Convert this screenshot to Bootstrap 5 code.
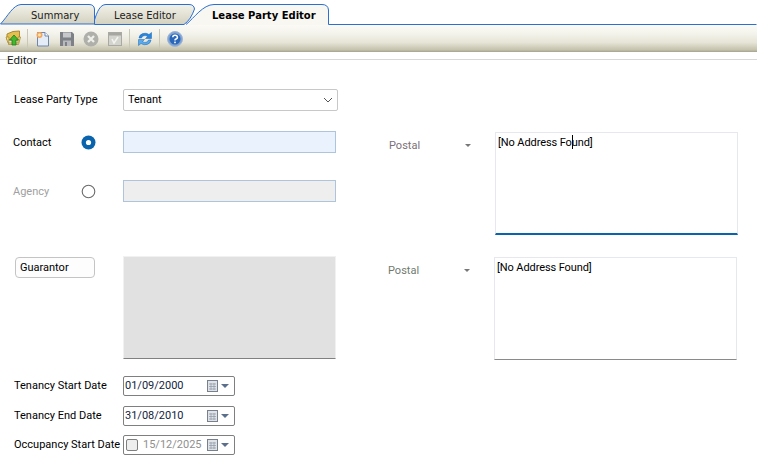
<!DOCTYPE html>
<html lang="en">
<head>
<meta charset="utf-8">
<title>Lease Party Editor</title>
<link rel="stylesheet" href="https://cdn.jsdelivr.net/npm/bootstrap@5.3.0/dist/css/bootstrap.min.css">
<style>
html,body{width:757px;height:465px;overflow:hidden;background:#fff;color:#000;font-family:Roboto,"Liberation Sans",sans-serif;font-size:11px;line-height:14px}
.tabstrip{height:25px;position:relative;background:#fff}
.tabshape{position:absolute;left:0;top:0}
.tabtext{position:absolute;top:9px;font-family:"DejaVu Sans",sans-serif;font-size:10px;line-height:14px;color:#222;white-space:nowrap}
.tabtext.act{font-weight:700;color:#000;font-size:10px}
.toolstrip{height:27px;background:linear-gradient(#fbfaf6 0,#f3f2ea 35%,#e6e4d6 65%,#c4c2ac 92%,#a5a38c 100%);padding-left:5px}
.toolstrip svg{display:block;flex:none}
.tsep{width:1px;height:20px;background:#c9c7b6;flex:none}
.tl5{margin-left:5px}.tl6{margin-left:6px}.tl7{margin-left:7px}.tl8{margin-left:8px}
.legend-row{height:14px;color:#222}
.legend-line{height:1px;background:#d8d8d8}
.legend-stub{width:7px}
.legend-txt{padding:2px 1px 0 0;font-size:11.5px}
.formarea{padding-left:14px}
.rowtype{margin-top:23px;height:22px}
.lbl{width:109px;flex:none;white-space:nowrap}
.selbox{width:215px;height:22px;border:1px solid #c8c8c8;border-radius:2px;padding:0 4px;background:#fff}
.blockone{margin-top:21px;height:104px}
.leftcol{width:375px;flex:none;margin-top:-1px}
.contactrow{height:22px}
.agencyrow{height:22px;margin-top:27px;color:#a0a0a0}
.lblshort{width:68px;flex:none;margin-left:-1px;padding-top:1px}
.radiobox{width:15px;height:15px;flex:none;margin-right:27px}
.inp{width:213px;height:22px;border:1px solid #aec3dc;flex:none}
.inp-on{background:#eaf2fd}
.inp-off{background:#eeeeee}
.postal{flex:none;width:106px;padding-top:7px;color:#7c7078;position:relative}
.caretbox{position:absolute;left:76px;top:12px;width:0;height:0;border-left:3px solid transparent;border-right:3px solid transparent;border-top:3px solid #777}
.addr{width:243px;flex:none;padding:2px;background:#fff;border:1px solid #e6e8ee;position:relative;letter-spacing:-.1px}
.addr-one{height:103px;border-bottom:2px solid #0a64ad}
.addr-two{height:103px;padding-top:3px;border-bottom:1px solid #8a8a8a}
.cursorbar{display:inline-block;width:1px;height:14px;background:#000;margin:0 -1px 0 0;vertical-align:-3px}
.blocktwo{margin-top:21px;height:104px}
.guarbtn{width:80px;height:21px;margin-left:1px;border:1px solid #c4c4c4;border-radius:4px;padding:0 4px;background:#fdfdfd;line-height:19px;font-size:11px}
.greybox{width:213px;height:103px;background:#e1e1e1;border:1px solid #f1f1f1;border-bottom:1px solid #808080;margin-left:28px;margin-top:-1px;flex:none}
.postaltwo{color:#6f7a6f;margin-left:52px}
.rowdate{height:20px}
.datebox{width:112px;height:20px;border:1px solid #7f7f7f;border-radius:2px;padding:0 0 0 1px;background:#fff;flex:none}
.dval{flex:1;color:#10243c}
.dval.off{color:#8f8f8f}
.dchk{width:12px;height:12px;border:1px solid #7f7f7f;border-radius:2px;background:#eee;margin:0 5px 0 1px;flex:none}
.dcal{flex:none;margin-right:2px}
.dcaret{width:0;height:0;border-left:4px solid transparent;border-right:4px solid transparent;border-top:4px solid #5a6f8c;margin-right:5px;flex:none}
.datestack{margin-top:15px}
.gap-dates{margin-top:10px}
.gap-dates2{margin-top:9px}
</style>
</head>
<body>
<div class="tabstrip">
  <svg class="tabshape" width="757" height="25" viewBox="0 0 757 25">
    <defs>
      <linearGradient id="tg" x1="0" y1="0" x2="0" y2="1"><stop offset="0" stop-color="#f3f2ea"/><stop offset="1" stop-color="#d3d1bf"/></linearGradient>
    </defs>
    <path d="M0.5 24 C8 16 13 5 21 4.500 H89 Q94 4.500 94.500 9 V24 Z" fill="url(#tg)" stroke="#2d6fd0"/>
    <path d="M94.500 20 C97 12 100 4.500 106 4.500 H189 Q194 4.500 194.500 9 C192 16 189 21 184 24.500 H94.500 Z" fill="url(#tg)" stroke="#2d6fd0"/>
    <path d="M186 24.500 C194 18 203 4.500 214 4.500 H322 Q328 4.500 328.500 10 V24.500 H756.500" fill="#f8f7f2" stroke="#2d6fd0"/>
    <rect x="187" y="24" width="141" height="1" fill="#f8f7f2"/>
  </svg>
  <span class="tabtext" style="left:31px">Summary</span>
  <span class="tabtext" style="left:114px">Lease Editor</span>
  <span class="tabtext act" style="left:212px">Lease Party Editor</span>
</div>
<div class="toolstrip d-flex align-items-center">
  <svg width="17" height="17" viewBox="0 0 17 17"><path d="M2 4 L8 1.500 L14.500 1 V10 H2 Z" fill="#e6bf50" stroke="#a88a33"/><path d="M1 7 H4 L3.500 14.500 H13.500 L15.500 7 H13 V13 H3 Z" fill="#f7e08a" stroke="#a88a33" stroke-width=".8"/><path d="M9 5 L13.500 10 H11 V15 H7 V10 H4.500 Z" fill="#49b52f" stroke="#1f7d19" stroke-width=".8"/></svg>
  <span class="tsep tl5"></span>
  <svg width="16" height="16" viewBox="0 0 16 16" class="tl7"><path d="M2.500 1.500 H10 L13.500 5 V15 H2.500 Z" fill="#e4ecf8" stroke="#6f86ad"/><path d="M10 1.500 V5 H13.500" fill="#fff" stroke="#6f86ad"/><circle cx="4.500" cy="4" r="3" fill="#f3a55f"/><circle cx="4.500" cy="4" r="1.400" fill="#fde8a8"/></svg>
  <svg width="16" height="16" viewBox="0 0 16 16" class="tl8"><path d="M1 1 H13 L15 3 V15 H1 Z" fill="#7d8085"/><rect x="4" y="1.500" width="8" height="5" fill="#c5c7ca"/><rect x="4" y="9.500" width="8" height="5.500" fill="#b8babd"/><rect x="6" y="11" width="2" height="4" fill="#7d8085"/></svg>
  <svg width="16" height="16" viewBox="0 0 16 16" class="tl8"><circle cx="8" cy="8" r="7.500" fill="#b0b0ab"/><path d="M5 5 L11 11 M11 5 L5 11" stroke="#eeeeea" stroke-width="2.300"/></svg>
  <svg width="16" height="16" viewBox="0 0 16 16" class="tl8"><rect x="1.500" y="1.500" width="13" height="13" fill="#d4d4ce" stroke="#aaaaa4"/><path d="M2 2 H14 V4.500 H2 Z" fill="#a7a7a1"/><path d="M5 8 L7 12 L11 6" fill="none" stroke="#f2f2ee" stroke-width="1.600"/></svg>
  <span class="tsep tl6"></span>
  <svg width="16" height="16" viewBox="0 0 16 16" class="tl7"><path d="M2 7 A6 5 0 0 1 12 3.500 L14.500 1.500 V7.500 H8.500 L10.500 5.500 A3.500 3 0 0 0 4.500 7 Z" fill="#2a85dc" stroke="#1866b5" stroke-width=".5"/><path d="M14 9 A6 5 0 0 1 4 12.500 L1.500 14.500 V8.500 H7.500 L5.500 10.500 A3.500 3 0 0 0 11.500 9 Z" fill="#58a9ee" stroke="#1866b5" stroke-width=".5"/></svg>
  <span class="tsep tl6"></span>
  <svg width="16" height="16" viewBox="0 0 16 16" class="tl7"><circle cx="8" cy="8" r="7.500" fill="#7fa3d3" stroke="#9fb5d5"/><circle cx="8" cy="8" r="5.500" fill="#2b67b8"/><path d="M5.800 6.300 A2.300 2 0 1 1 8.500 8.200 Q8 8.600 8 9.600" fill="none" stroke="#fff" stroke-width="1.500"/><rect x="7.200" y="10.600" width="1.600" height="1.600" fill="#fff"/></svg>
</div>
<div class="legend-row d-flex align-items-center">
  <span class="legend-stub legend-line"></span>
  <span class="legend-txt">Editor</span>
  <span class="legend-line flex-grow-1"></span>
</div>
<div class="formarea">
  <div class="rowtype d-flex align-items-center">
    <span class="lbl">Lease Party Type</span>
    <div class="selbox d-flex align-items-center justify-content-between">
      <span>Tenant</span>
      <svg width="10" height="6" viewBox="0 0 10 6"><path d="M1 1 L5 5 L9 1" fill="none" stroke="#555" stroke-width="1"/></svg>
    </div>
  </div>
  <div class="blockone d-flex">
    <div class="leftcol">
      <div class="contactrow d-flex align-items-center">
        <span class="lblshort">Contact</span>
        <svg class="radiobox" viewBox="0 0 15 15"><circle cx="7.500" cy="7.500" r="7" fill="#0a64ad"/><circle cx="7.500" cy="7.500" r="2.600" fill="#fff"/></svg>
        <span class="inp inp-on"></span>
      </div>
      <div class="agencyrow d-flex align-items-center">
        <span class="lblshort">Agency</span>
        <svg class="radiobox" viewBox="0 0 15 15"><circle cx="7.500" cy="7.500" r="6.300" fill="#fff" stroke="#6a6a6a" stroke-width="1.100"/></svg>
        <span class="inp inp-off"></span>
      </div>
    </div>
    <div class="postal">Postal<span class="caretbox"></span></div>
    <div class="addr addr-one">[No Address Fo<span class="cursorbar"></span>und]</div>
  </div>
  <div class="blocktwo d-flex">
    <button type="button" class="guarbtn text-start">Guarantor</button>
    <div class="greybox"></div>
    <div class="postal postaltwo">Postal<span class="caretbox"></span></div>
    <div class="addr addr-two">[No Address Found]</div>
  </div>
  <div class="datestack">
    <div class="rowdate d-flex align-items-center">
      <span class="lbl">Tenancy Start Date</span>
      <div class="datebox d-flex align-items-center"><span class="dval">01/09/2000</span>
        <svg class="dcal" width="12" height="13" viewBox="0 0 12 13"><rect x=".5" y=".5" width="10" height="11" fill="#dfe3e8" stroke="#77808c"/><path d="M2 4H9M2 6.500H9M2 9H9M4 3V10M7 3V10" stroke="#8d96a3" stroke-width=".7"/></svg><span class="dcaret"></span></div>
    </div>
    <div class="rowdate gap-dates d-flex align-items-center">
      <span class="lbl">Tenancy End Date</span>
      <div class="datebox d-flex align-items-center"><span class="dval">31/08/2010</span>
        <svg class="dcal" width="12" height="13" viewBox="0 0 12 13"><rect x=".5" y=".5" width="10" height="11" fill="#dfe3e8" stroke="#77808c"/><path d="M2 4H9M2 6.500H9M2 9H9M4 3V10M7 3V10" stroke="#8d96a3" stroke-width=".7"/></svg><span class="dcaret"></span></div>
    </div>
    <div class="rowdate gap-dates2 d-flex align-items-center">
      <span class="lbl">Occupancy Start Date</span>
      <div class="datebox d-flex align-items-center"><span class="dchk"></span><span class="dval off">15/12/2025</span>
        <svg class="dcal" width="12" height="13" viewBox="0 0 12 13"><rect x=".5" y=".5" width="10" height="11" fill="#dfe3e8" stroke="#77808c"/><path d="M2 4H9M2 6.500H9M2 9H9M4 3V10M7 3V10" stroke="#8d96a3" stroke-width=".7"/></svg><span class="dcaret"></span></div>
    </div>
  </div>
</div>
</body>
</html>
